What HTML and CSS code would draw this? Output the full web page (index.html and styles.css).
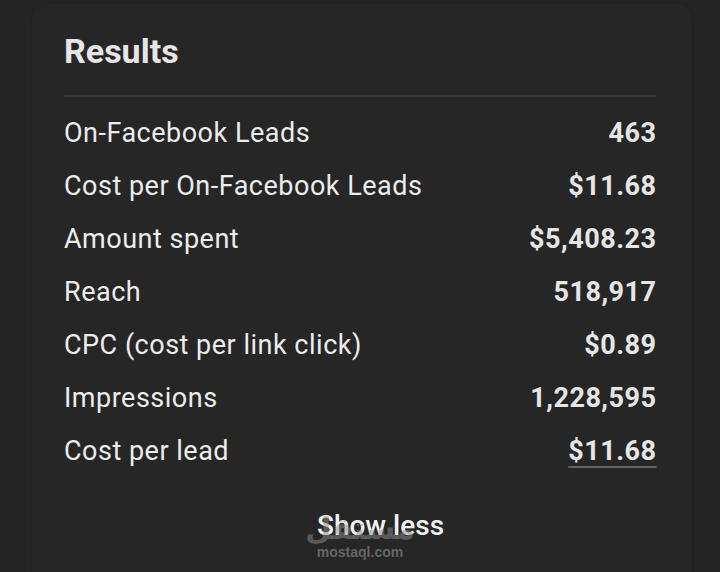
FILE: index.html
```html
<!DOCTYPE html>
<html lang="en">
<head>
<meta charset="utf-8">
<link rel="stylesheet" href="styles.css">
</head>
<body>
<div class="card">
  <h1 class="title">Results</h1>
  <div class="divider"></div>
  <div class="rows">
    <div class="row"><span class="label">On-Facebook Leads</span><span class="value">463</span></div>
    <div class="row"><span class="label">Cost per On-Facebook Leads</span><span class="value">$11.68</span></div>
    <div class="row"><span class="label">Amount spent</span><span class="value">$5,408.23</span></div>
    <div class="row"><span class="label">Reach</span><span class="value">518,917</span></div>
    <div class="row"><span class="label">CPC (cost per link click)</span><span class="value">$0.89</span></div>
    <div class="row"><span class="label">Impressions</span><span class="value">1,228,595</span></div>
    <div class="row"><span class="label">Cost per lead</span><span class="value underlined">$11.68</span></div>
  </div>
  <div class="footer">
    <span class="show-less">Show less</span>
    <div class="watermark">
      <span class="wm-logo">مستقل</span>
      <span class="wm-text">mostaql.com</span>
    </div>
  </div>
</div>
</body>
</html>
```
FILE: styles.css
```css
html, body {
  margin: 0;
  padding: 0;
  background: #242424;
  height: 572px;
  overflow: hidden;
}
body {
  font-family: Roboto, "Liberation Sans", sans-serif;
  color: #e9e9e9;
}
.card {
  margin: 4px 0 0 32px;
  width: 660px;
  height: 620px;
  box-sizing: border-box;
  background: #262626;
  border-radius: 14px;
  box-shadow: 0 0 0 1px #222222;
  padding: 27px 36px 0 32px;
}
.title {
  margin: 0 0 24px 0;
  font-size: 34px;
  line-height: 40px;
  font-weight: 700;
  color: #e6e6e6;
}
.divider {
  height: 2px;
  background: #393939;
}
.rows {
  margin-top: 10px;
}
.row {
  display: flex;
  justify-content: space-between;
  align-items: baseline;
  height: 53px;
  line-height: 53px;
  font-size: 27px;
  letter-spacing: 0.5px;
}
.label {
  font-weight: 400;
  color: #ececec;
}
.value {
  font-weight: 700;
  color: #e6e6e6;
  margin-right: -0.5px;
}
.underlined {
  text-decoration: underline;
  text-decoration-color: #626262;
  text-decoration-thickness: 2px;
  text-underline-offset: 6px;
}
.footer {
  position: relative;
  margin-top: 32px;
  display: flex;
  justify-content: center;
  padding-left: 41px;
}
.show-less {
  font-size: 28px;
  line-height: 32px;
  font-weight: 500;
  color: #f2f2f2;
}
.watermark {
  position: absolute;
  left: 253px;
  top: 4px;
  width: 86px;
  display: flex;
  flex-direction: column;
  align-items: center;
  pointer-events: none;
}
.wm-logo {
  font-family: "DejaVu Sans", sans-serif;
  font-weight: 700;
  font-size: 30px;
  line-height: 30px;
  color: rgba(140, 140, 140, 0.5);
  letter-spacing: 2px;
}
.wm-text {
  font-family: "Liberation Sans", sans-serif;
  font-weight: 700;
  font-size: 14px;
  line-height: 16px;
  color: rgba(130, 130, 130, 0.7);
}
```
